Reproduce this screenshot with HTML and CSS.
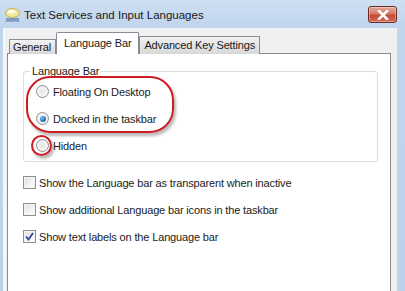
FILE: index.html
```html
<!DOCTYPE html>
<html lang="en">
<head>
	<meta charset="UTF-8">
	<title>Text Services and Input Languages</title>
	<link rel="stylesheet" href="styles.css">
</head>
<body>

	<div class="window">
		<!-- title bar -->
		<div class="titlebar">
			<svg class="app-icon" width="17" height="16" viewBox="0 0 17 16">
				<ellipse cx="8.5" cy="6" rx="7" ry="4.5" fill="#f3e79a" stroke="#c9b24e" stroke-width="1"/>
				<ellipse cx="7.5" cy="4.8" rx="4" ry="2" fill="#fffbe0"/>
				<rect x="2" y="11" width="13" height="3" fill="#7d9cc4"/>
				<rect x="1" y="14" width="15" height="1" fill="#9aa9bd"/>
			</svg>
			<div class="title">Text Services and Input Languages</div>
			<div class="close-btn">
				<svg width="12" height="10" viewBox="0 0 12 10">
					<path d="M2 1 L10 9 M10 1 L2 9" stroke="#ffffff" stroke-width="2.6" stroke-linecap="square"/>
				</svg>
			</div>
		</div>

		<div class="dialog">
			<div class="tabs">
				<div class="tab">General</div>
				<div class="tab active">Language Bar</div>
				<div class="tab">Advanced Key Settings</div>
			</div>

			<div class="panel">
				<div class="groupbox">
					<div class="groupbox-title">Language Bar</div>
					<div class="option"><span class="radio"></span>Floating On Desktop</div>
					<div class="option"><span class="radio checked"></span>Docked in the taskbar</div>
					<div class="option"><span class="radio"></span>Hidden</div>

					<!-- red annotation marks -->
					<div class="mark mark-group"></div>
					<div class="mark mark-hidden"></div>
				</div>

				<div class="check-row first"><span class="checkbox"></span>Show the Language bar as transparent when inactive</div>
				<div class="check-row"><span class="checkbox"></span>Show additional Language bar icons in the taskbar</div>
				<div class="check-row">
					<span class="checkbox">
						<svg width="9" height="9" viewBox="0 0 9 9"><path d="M1 4.5 L3.5 7.5 L8 1" fill="none" stroke="#2a4a9a" stroke-width="1.8"/></svg>
					</span>Show text labels on the Language bar
				</div>
			</div>
		</div>
	</div>

</body>
</html>
```
FILE: styles.css
```css
body {
	margin: 0;
	height: 291px;
	overflow: hidden;
	background: linear-gradient(180deg, #c2d6ee 0%, #bcd2ec 100%);
	font-family: "Liberation Sans", Arial, sans-serif;
	font-size: 11px;
	letter-spacing: -0.15px;
	color: #1b1b1b;
}

.window {
	display: flex;
	flex-direction: column;
	height: 291px;
}

.titlebar {
	height: 28px;
	display: flex;
	align-items: center;
	padding: 0 8px 0 4px;
	background: linear-gradient(180deg, #cfe0f3 0%, #c4d8ef 60%, #c0d5ee 100%);
}

.app-icon {
	margin-right: 3px;
	margin-top: 1px;
}

.title {
	flex: 1;
	font-size: 11.5px;
	letter-spacing: 0;
	color: #1a1a1a;
	padding-top: 1px;
}

.close-btn {
	width: 27px;
	height: 15px;
	margin-top: 1px;
	display: flex;
	align-items: center;
	justify-content: center;
	border: 1px solid #6b2b24;
	border-radius: 3px;
	background: linear-gradient(180deg, #e6aa9e 0%, #d67866 45%, #c24a32 55%, #d16a52 100%);
	box-shadow: inset 0 0 0 1px rgba(255,255,255,0.35);
}

.dialog {
	flex: 1;
	margin: 0 8px 0 3px;
	padding: 4px 6px 0 4px;
	background: linear-gradient(90deg, #f7f8fa 0px, #f0f0f0 4px);
	display: flex;
	flex-direction: column;
}

.tabs {
	display: flex;
	align-items: flex-end;
	padding-left: 2px;
	margin-bottom: -1px;
	position: relative;
	z-index: 1;
}

.tab {
	height: 15px;
	line-height: 15px;
	padding: 0 3px;
	border: 1px solid #898c95;
	border-bottom: none;
	background: linear-gradient(180deg, #f2f2f2 0%, #e4e4e4 50%, #d8d8d8 100%);
	margin-right: -1px;
}

.tab:first-child {
	height: 14px;
	line-height: 15px;
	padding-right: 4px;
}

.tab.active {
	height: 21px;
	line-height: 20px;
	padding: 0 7px;
	margin: 0 1px;
	background: #ffffff;
	border-radius: 2px 2px 0 0;
}

.tab:last-child {
	height: 17px;
	line-height: 17px;
	margin-left: -1px;
	padding: 0 4px;
}

.panel {
	flex: 1;
	background: #ffffff;
	border: 1px solid #898c95;
	border-bottom: none;
	padding: 17px 12px 0 15px;
}

.groupbox {
	position: relative;
	box-sizing: border-box;
	height: 91px;
	padding: 0 0 0 12px;
	border: 1px solid #d5dfe5;
	border-radius: 3px;
}

.groupbox-title {
	display: table;
	height: 14px;
	line-height: 14px;
	margin: -8px 0 0 -6px;
	padding: 0 2px;
	background: #ffffff;
}

.option {
	display: flex;
	align-items: center;
	height: 27px;
}

.radio {
	width: 11px;
	height: 11px;
	border-radius: 50%;
	border: 1px solid #8e8f8f;
	background: radial-gradient(circle at 50% 50%, #e4e4e4 0%, #f6f6f6 60%, #d6d6d6 100%);
	margin-right: 4px;
	position: relative;
}

.radio.checked::after {
	content: "";
	position: absolute;
	left: 2.5px;
	top: 2.5px;
	width: 6px;
	height: 6px;
	border-radius: 50%;
	background: radial-gradient(circle at 35% 35%, #8ac4f5 0%, #2b72c0 55%, #164c8c 100%);
}

/* red annotation marks drawn over the screenshot */
.mark {
	position: absolute;
	border: 2px solid #cc1c24;
	box-shadow: 2px 3px 3px rgba(0,0,0,0.28);
}

.mark-group {
	left: 2px;
	top: 4px;
	width: 144px;
	height: 53px;
	border-radius: 24px;
}

.mark-hidden {
	left: 7px;
	top: 63px;
	width: 17px;
	height: 17px;
	border-radius: 50%;
}

.check-row {
	display: flex;
	align-items: center;
	height: 27px;
}

.check-row.first {
	margin-top: 7px;
}

.checkbox {
	width: 11px;
	height: 11px;
	border: 1px solid #8e8f8f;
	background: linear-gradient(135deg, #dcdcdc 0%, #f4f4f4 60%, #ffffff 100%);
	box-shadow: inset 0 0 0 1px #f4f4f4;
	margin-right: 3px;
	display: flex;
	align-items: center;
	justify-content: center;
}
```
